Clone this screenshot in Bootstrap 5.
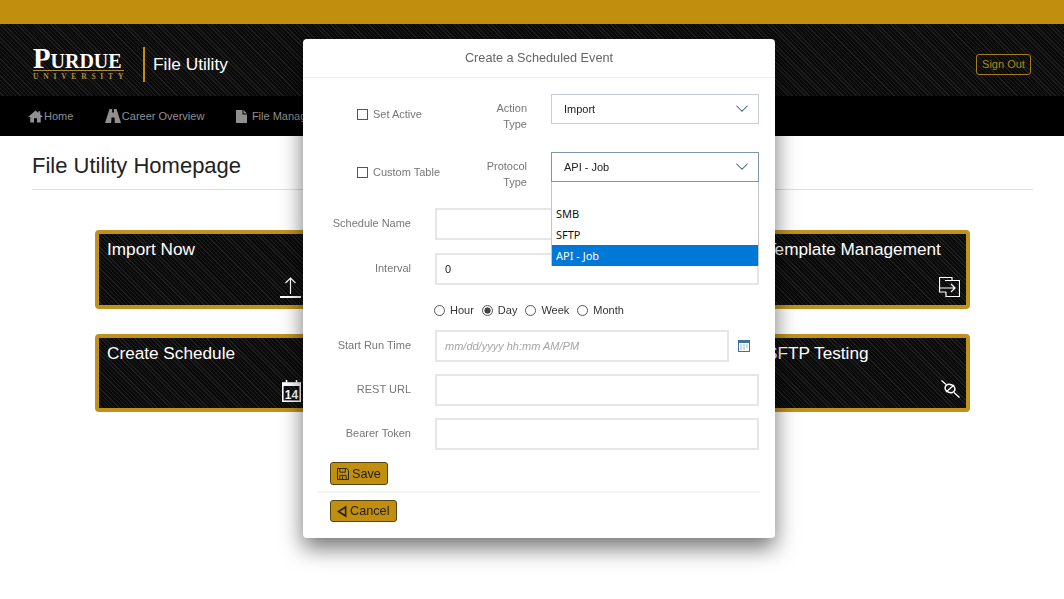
<!DOCTYPE html>
<html lang="en">
<head>
    <meta charset="UTF-8">
    <meta name="viewport" content="width=device-width, initial-scale=1.0">
    <title>File Utility</title>
    <link href="https://cdn.jsdelivr.net/npm/bootstrap@5.3.0/dist/css/bootstrap.min.css" rel="stylesheet">
    <style>
        body {
            font-family: "Liberation Sans", Arial, sans-serif;
            background-color: #fff;
            overflow: hidden;
        }
        .gold-bar { height: 24px; background-color: #c28e0e; }
        .hatch {
            background-color: #0b0b0b;
            background-image: repeating-linear-gradient(45deg, #0a0a0a 0 2px, #1f1f1f 2px 3px);
        }
        .top-head { height: 72px; padding: 9px 33px 0 33px; }
        .logo-word { font-family: "Liberation Serif", serif; color: #fff; font-size: 28.7px; line-height: 24px; font-variant: small-caps; font-weight: 700; border-bottom: 1px solid #b08d3c; width: 91px; white-space: nowrap; }
        .logo-sub { font-family: "Liberation Serif", serif; color: #b08d3c; font-size: 7.5px; line-height: 9px; letter-spacing: 4.8px; margin: 1px -6px 2px 0; white-space: nowrap; font-weight: 700; }
        .logo-rule { width: 2px; height: 35px; background-color: #c28e0e; margin: 0 8px 0 19px; }
        .app-name { color: #fff; font-size: 17.3px; }
        .sign-btn { color: #b3861a; border: 1px solid #a57c17; border-radius: 3px; font-size: 11px; padding: 3px 5px; background: transparent; line-height: 13px; width: 55px; }
        .main-nav { height: 40px; background-color: #000; padding-left: 28px; }
        .main-nav a { color: #909090; font-size: 11px; text-decoration: none; margin-right: 31.5px; display: flex; align-items: center; gap: 1px; }
        .page-title { font-size: 22px; font-weight: 400; color: #222; margin: 0 31px 0 32px; padding: 17px 0 11px; line-height: 25px; border-bottom: 1px solid #ddd; }
        .tile-wrap { padding: 40px 94px 0 95px; }
        .tile-row { margin-bottom: 25px; }
        .tile { width: 216px; height: 78.5px; border: 4px solid #c0921c; border-radius: 4px; padding: 3px 6px 6px 8px; color: #fff; }
        .tile-name { font-size: 17.2px; line-height: 24px; }
        .tile-icon { height: 22px; }
        .ev-dialog { position: fixed; left: 303px; top: 39px; width: 472px; height: 499px; margin: 0; }
        .ev-content { height: 100%; border: 0; border-radius: 4px; box-shadow: 0 10px 22px rgba(0,0,0,.55); background-color: #fff; }
        .ev-head { height: 39px; padding-top: 1px; border-bottom: 1px solid #eee; color: #666; font-size: 12.7px; }
        .ev-body { padding: 16px 16px 0 0; }
        .ev-row { height: 32px; }
        .ev-gap { margin-bottom: 12px; }
        .ev-label { width: 108px; margin-right: 24px; padding-bottom: 2px; color: #777; font-size: 11px; text-align: right; flex-shrink: 0; }
        .ev-input { height: 100%; border: 2px solid #e6e6e6; border-radius: 0; font-size: 11px; color: #222; padding: 0 8px; box-shadow: none; }
        .ev-input::placeholder { color: #a5a5a5; font-style: italic; }
        .top-row { height: 30px; margin-bottom: 28px; }
        .top-row.last-top { margin-bottom: 26px; }
        .sched-row { margin-bottom: 13px; }
        .top-check { width: 194px; margin-left: 54px; padding-top: 10px; flex-shrink: 0; font-size: 11px; color: #777; }
        .top-check input[type=checkbox] { width: 11px; height: 11px; margin: 0 5px 0 0; border: 1px solid #555; border-radius: 0; }
        .type-label { width: 76px; margin-left: -100px; padding-top: 14px; color: #777; font-size: 11px; line-height: 16px; text-align: right; flex-shrink: 0; }
        .type-select { margin-left: 24px; height: 30px; font-size: 11px; color: #222; border: 1px solid #c9ced6; border-radius: 0; padding: 0 12px; box-shadow: none;
            background-size: 16px 12px; background-position: right 8px center;
            background-image: url("data:image/svg+xml,%3csvg xmlns='http://www.w3.org/2000/svg' viewBox='0 0 16 16'%3e%3cpath fill='none' stroke='%233e6288' stroke-linecap='round' stroke-width='1.4' d='M1 4l7 7 7-7'/%3e%3c/svg%3e"); }
        .type-select.is-open { border-color: #7d96ad; }
        .proto-wrap { position: relative; margin-left: 24px; flex: 1; }
        .proto-wrap .type-select { margin-left: 0; width: 100%; }
        .proto-list { position: absolute; top: 30px; left: 0; right: 0; height: 84px; background-color: #fff; border: 1px solid #c4c4c4; border-top: 0; padding-top: 21px; z-index: 2; font-family: "Noto Sans", sans-serif; font-size: 11px; color: #111; }
        .proto-list div { height: 21px; line-height: 21px; padding-left: 4px; }
        .proto-list .picked { background-color: #0078d7; color: #fff; }
        .radio-row { height: 45px; padding: 5px 0 0 131px; font-size: 11px; color: #333; line-height: 0; }
        .radio-row input { width: 11px; height: 11px; margin: 0 5px 0 0; border: 1px solid #555; }
        .radio-row input:checked { background-color: #fff; border-color: #555; background-image: radial-gradient(circle, #444 2.8px, #fff 3.4px); }
        .radio-row label { margin-right: 8px; display: flex; align-items: center; }
        .cal-btn { width: 30px; flex-shrink: 0; padding-bottom: 3px; }
        .ev-gold { display: flex; align-items: center; gap: 3px; background-color: #c28e0e; border: 1px solid #54420f; border-radius: 3px; color: #222; font-size: 12.7px; line-height: 16px; padding: 0 6px; height: 23px; margin-left: 27px; }
        .ev-cancel { height: 22px; }
        .ev-divider { border-top: 2px solid #f3f3f3; margin: 6px -1px 7px 15px; }
    </style>
</head>
<body>
    <div class="gold-bar"></div>
    <header class="top-head hatch d-flex align-items-center justify-content-between">
        <div class="d-flex align-items-center">
            <div>
                <div class="logo-word">Purdue</div>
                <div class="logo-sub">UNIVERSITY</div>
            </div>
            <div class="logo-rule"></div>
            <span class="app-name">File Utility</span>
        </div>
        <button class="sign-btn" type="button">Sign Out</button>
    </header>
    <nav class="main-nav d-flex align-items-center">
        <a href="#">
            <svg width="15" height="14" viewBox="0 0 16 14" fill="#909090"><path d="M8 1 0 8h2.400v6h4V9.500h3.200V14h4V8H16l-3-2.600V2h-2v1.600z"/></svg>
            Home
        </a>
        <a href="#">
            <svg width="16" height="14" viewBox="0 0 16 14" fill="#909090"><path d="M4.500 0H7.200L7 3.500H9L8.800 0h2.700L16 14H9.800L9.500 8.500h-3L6.200 14H0z"/></svg>
            Career Overview
        </a>
        <a href="#">
            <svg class="me-1" width="11" height="13" viewBox="0 0 11 13" fill="#909090"><path d="M0 0h6.500v4.500H11V13H0zM7.500 0 11 3.500H7.500z"/></svg>
            File Management
        </a>
    </nav>

    <h1 class="page-title">File Utility Homepage</h1>

    <div class="tile-wrap">
        <div class="tile-row d-flex justify-content-between">
            <div class="tile hatch d-flex flex-column justify-content-between">
                <div class="tile-name">Import Now</div>
                <div class="tile-icon d-flex justify-content-end">
                    <svg width="21" height="21" viewBox="0 0 21 21" fill="none" stroke="#fff"><path d="M10.500 1v16M5.500 6l5-5 5 5" stroke-width="1.200"/><path d="M0 20h21" stroke-width="2"/></svg>
                </div>
            </div>
            <div class="tile hatch d-flex flex-column justify-content-between">
                <div class="tile-name">Template Management</div>
                <div class="tile-icon d-flex justify-content-end">
                    <svg width="21" height="20" viewBox="0 0 21 20" fill="none" stroke="#fff" stroke-width="1.200"><path d="M13 3V.5H.5V15H7"/><path d="M6 3.500h14.500v16H7V15"/><path d="M1 11h15M12 7l4 4-4 4"/></svg>
                </div>
            </div>
        </div>
        <div class="tile-row d-flex justify-content-between">
            <div class="tile hatch d-flex flex-column justify-content-between">
                <div class="tile-name">Create Schedule</div>
                <div class="tile-icon d-flex justify-content-end">
                    <svg width="19" height="22" viewBox="0 0 19 22"><rect x=".8" y="3" width="17.400" height="18.200" fill="none" stroke="#fff" stroke-width="1.600"/><path d="M.6 3h17.800v3H.6z" fill="#fff"/><path d="M4.500 0v4M14.500 0v4" stroke="#fff" stroke-width="1.600"/><text x="9.500" y="18.800" text-anchor="middle" fill="#fff" font-family="Liberation Sans, sans-serif" font-weight="700" font-size="12">14</text></svg>
                </div>
            </div>
            <div class="tile hatch d-flex flex-column justify-content-between">
                <div class="tile-name">SFTP Testing</div>
                <div class="tile-icon d-flex justify-content-end">
                    <svg width="19" height="18" viewBox="0 0 19 18" fill="none" stroke="#fff" stroke-width="1.300"><path d="M.5.500l4.500 4M13 12.500l5.500 5"/><ellipse cx="9" cy="8.500" rx="5" ry="4" transform="rotate(20 9 8.500)" stroke-width="1.600"/><path d="M5 12l8-7"/></svg>
                </div>
            </div>
        </div>
    </div>

    <div class="modal-dialog ev-dialog">
        <div class="modal-content ev-content">
            <div class="ev-head d-flex align-items-center justify-content-center">Create a Scheduled Event</div>
            <div class="ev-body">
                <div class="top-row d-flex align-items-center">
                    <label class="top-check d-flex align-items-center">
                        <input type="checkbox" class="form-check-input">Set Active
                    </label>
                    <div class="type-label">Action<br>Type</div>
                    <select class="form-select type-select"><option>Import</option></select>
                </div>
                <div class="top-row last-top d-flex align-items-center">
                    <label class="top-check d-flex align-items-center">
                        <input type="checkbox" class="form-check-input">Custom Table
                    </label>
                    <div class="type-label">Protocol<br>Type</div>
                    <div class="proto-wrap">
                        <select class="form-select type-select is-open"><option>API - Job</option></select>
                        <div class="proto-list">
                            <div>SMB</div>
                            <div>SFTP</div>
                            <div class="picked">API - Job</div>
                        </div>
                    </div>
                </div>
                <div class="ev-row sched-row d-flex align-items-center">
                    <label class="ev-label">Schedule Name</label>
                    <input type="text" class="form-control ev-input">
                </div>
                <div class="ev-row d-flex align-items-center">
                    <label class="ev-label">Interval</label>
                    <input type="text" class="form-control ev-input" value="0">
                </div>
                <div class="radio-row d-flex align-items-center">
                    <label><input class="form-check-input" type="radio" name="unit">Hour</label>
                    <label><input class="form-check-input" type="radio" name="unit" checked>Day</label>
                    <label><input class="form-check-input" type="radio" name="unit">Week</label>
                    <label><input class="form-check-input" type="radio" name="unit">Month</label>
                </div>
                <div class="ev-row ev-gap d-flex align-items-center">
                    <label class="ev-label">Start Run Time</label>
                    <input type="text" class="form-control ev-input" placeholder="mm/dd/yyyy hh:mm AM/PM">
                    <div class="cal-btn text-center">
                        <svg width="12" height="13" viewBox="0 0 12 13" fill="none"><rect x=".5" y="1.500" width="11" height="11" stroke="#3e6f9e"/><path d="M0 1h12v3H0z" fill="#3e6f9e"/><path d="M2.500 6h1M5.500 6h1M8.500 6h1M2.500 8h1M5.500 8h1M8.500 8h1M2.500 10h1M5.500 10h1" stroke="#3e6f9e"/></svg>
                    </div>
                </div>
                <div class="ev-row ev-gap d-flex align-items-center">
                    <label class="ev-label">REST URL</label>
                    <input type="text" class="form-control ev-input">
                </div>
                <div class="ev-row ev-gap d-flex align-items-center">
                    <label class="ev-label">Bearer Token</label>
                    <input type="text" class="form-control ev-input">
                </div>
                <button class="ev-gold" type="button">
                    <svg width="12" height="12" viewBox="0 0 13 13" fill="none" stroke="#222"><path d="M.5.500h10l2 2v10H.5z"/><path d="M3 .500v4h6v-4M3 12.500V8h7v4.500M6 9v3"/></svg>
                    Save
                </button>
                <div class="ev-divider"></div>
                <button class="ev-gold ev-cancel" type="button">
                    <svg width="10" height="13" viewBox="0 0 11 13" fill="none" stroke="#222" stroke-width="1.800"><path d="M9.500 1.500v10L1.500 6.500z"/></svg>
                    Cancel
                </button>
            </div>
        </div>
    </div>

    <script src="https://cdn.jsdelivr.net/npm/bootstrap@5.3.0/dist/js/bootstrap.bundle.min.js"></script>
</body>
</html>
